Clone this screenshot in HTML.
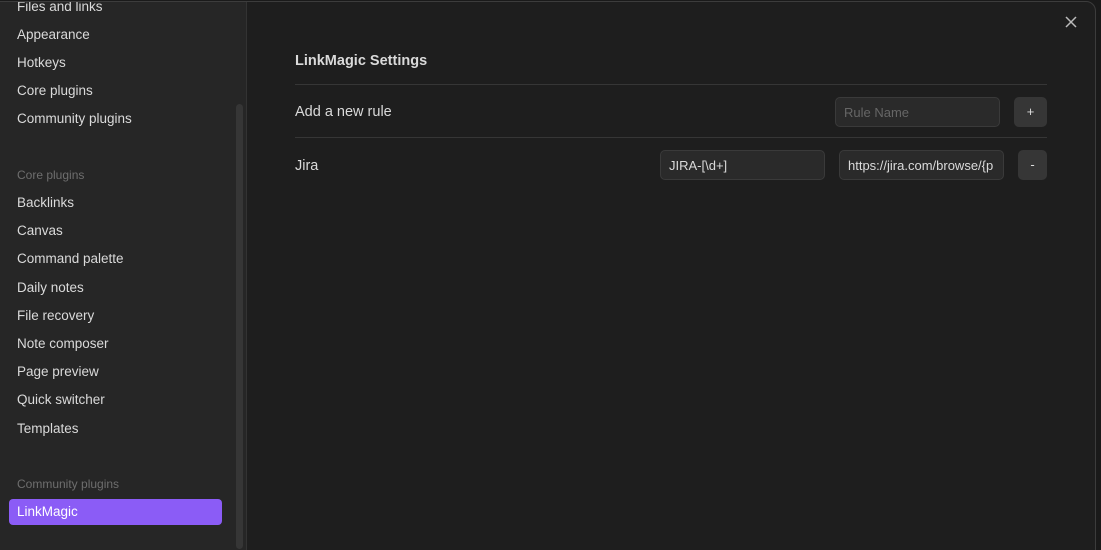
<!DOCTYPE html>
<html><head><style>
*{margin:0;padding:0;box-sizing:border-box}
html,body{width:1101px;height:550px;overflow:hidden}
body{background:#1a1a1a;font-family:"Liberation Sans",sans-serif;position:relative}
.modal{position:absolute;left:-11px;top:1px;width:1107px;height:560px;border:1px solid #3c3c3c;border-radius:10px;background:#1e1e1e;overflow:hidden}
.side{position:absolute;left:0;top:0;width:257px;height:100%;background:#262626;border-right:1px solid #333}
.it{position:absolute;left:27px;font-size:13.5px;color:#dadada}
.hd{position:absolute;left:27px;font-size:12px;color:#6e6e6e}
.sel{position:absolute;left:19px;top:497px;width:213px;height:26px;background:#8b5cf6;border-radius:4px;color:#fff;font-size:13.5px;padding:5px 8px}
.sb{position:absolute;left:246px;top:102px;width:7px;height:445px;background:#363636;border-radius:4px}
.t{position:absolute;color:#dadada;font-size:14.5px}
.line{position:absolute;left:305px;width:752px;height:1px;background:#363636}
.in{position:absolute;height:30px;background:#2a2a2a;border:1px solid #3a3a3a;border-radius:5px;font-size:13px;color:#dadada;padding:7px 8px;white-space:nowrap;overflow:hidden}
.btn{position:absolute;width:33px;height:30px;background:#363636;border-radius:5px;color:#ddd;font-size:13px;text-align:center;line-height:29px}
</style></head><body>
<div class="modal">
<div class="side">
<div class="it" style="top:-3px">Files and links</div>
<div class="it" style="top:25px">Appearance</div>
<div class="it" style="top:53px">Hotkeys</div>
<div class="it" style="top:81px">Core plugins</div>
<div class="it" style="top:109px">Community plugins</div>
<div class="hd" style="top:166px">Core plugins</div>
<div class="it" style="top:193px">Backlinks</div>
<div class="it" style="top:221px">Canvas</div>
<div class="it" style="top:249px">Command palette</div>
<div class="it" style="top:278px">Daily notes</div>
<div class="it" style="top:306px">File recovery</div>
<div class="it" style="top:334px">Note composer</div>
<div class="it" style="top:362px">Page preview</div>
<div class="it" style="top:390px">Quick switcher</div>
<div class="it" style="top:419px">Templates</div>
<div class="hd" style="top:475px">Community plugins</div>
<div class="sel">LinkMagic</div>
<div class="sb"></div>
</div>
<div class="t" style="left:305px;top:51px;font-weight:bold;font-size:14.5px">LinkMagic Settings</div>
<div class="line" style="top:82px"></div>
<div class="t" style="left:305px;top:102px">Add a new rule</div>
<div class="in" style="left:845px;top:95px;width:165px;color:#666">Rule Name</div>
<div class="btn" style="left:1024px;top:95px">+</div>
<div class="line" style="top:135px"></div>
<div class="t" style="left:305px;top:156px">Jira</div>
<div class="in" style="left:670px;top:148px;width:165px">JIRA-[\d+]</div>
<div class="in" style="left:849px;top:148px;width:165px">https://jira.com/browse/{p</div>
<div class="btn" style="left:1028px;top:148px;width:29px">-</div>
<svg style="position:absolute;left:1074px;top:13px" width="14" height="14"><path d="M2 2L12 12M12 2L2 12" stroke="#bbb" stroke-width="1.5"/></svg>
</div>
</body></html>
